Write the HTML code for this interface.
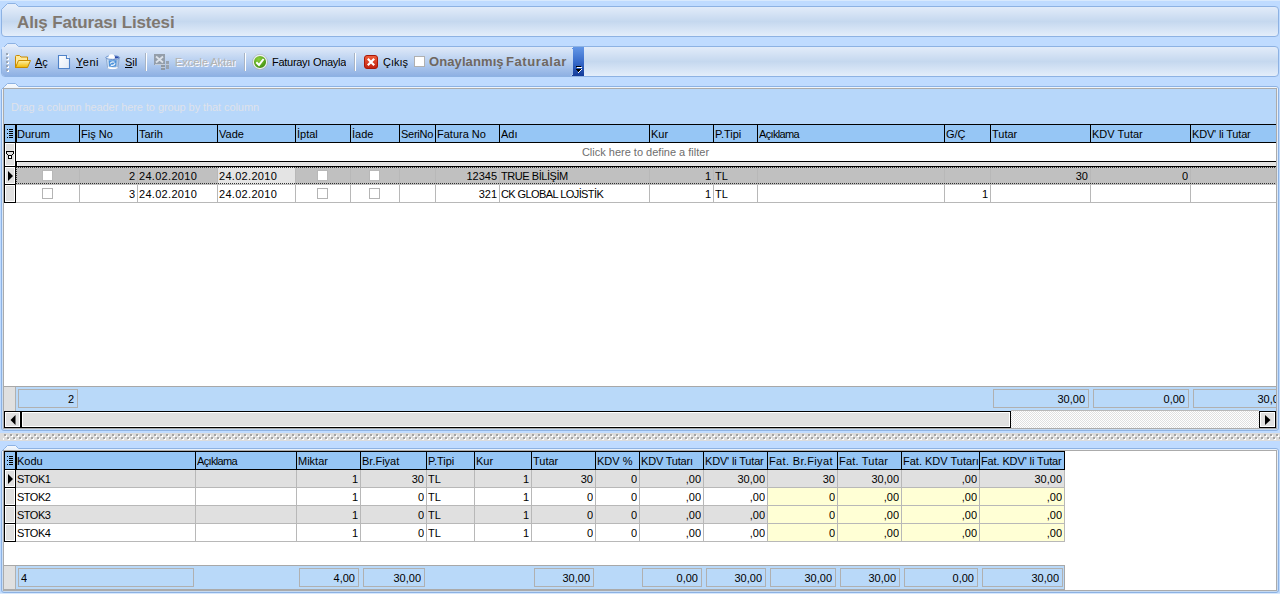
<!DOCTYPE html>
<html><head><meta charset="utf-8">
<style>
*{margin:0;padding:0;box-sizing:border-box}
html,body{width:1280px;height:594px;overflow:hidden}
body{background:#bfdbff;font-family:"Liberation Sans",sans-serif;font-size:11px;color:#000;position:relative}
.a{position:absolute}
.t{position:absolute;white-space:nowrap;line-height:17px;height:17px;overflow:hidden}
svg{position:absolute;overflow:visible}
</style></head><body>
<div class="a" style="left:0px;top:0px;width:1280px;height:1px;background:#d8e9fd"></div>
<svg style="left:0;top:0" width="1280" height="80">
 <defs>
  <linearGradient id="g1" gradientUnits="userSpaceOnUse" x1="0" y1="6" x2="0" y2="37">
   <stop offset="0" stop-color="#e4edfa"/>
   <stop offset="0.5" stop-color="#c5d8ef"/>
   <stop offset="1" stop-color="#e6effb"/>
  </linearGradient>
  <linearGradient id="g1b" gradientUnits="userSpaceOnUse" x1="0" y1="46" x2="0" y2="77">
   <stop offset="0" stop-color="#e4edfa"/>
   <stop offset="0.5" stop-color="#c5d8ef"/>
   <stop offset="1" stop-color="#e6effb"/>
  </linearGradient>
 </defs>
 <path d="M1.5,9.5 L1.5,33 Q1.5,36.5 5,36.5 L1275,36.5 Q1278.5,36.5 1278.5,33 L1278.5,10 Q1278.5,6.5 1275,6.5 L18.5,6.5 L15.5,3.5 L7.5,3.5 Z" fill="url(#g1)" stroke="#8db2e3"/>
 <path d="M1.5,49.5 L1.5,73 Q1.5,76.5 5,76.5 L1275,76.5 Q1278.5,76.5 1278.5,73 L1278.5,50 Q1278.5,46.5 1275,46.5 L18.5,46.5 L15.5,43.5 L7.5,43.5 Z" fill="url(#g1b)" stroke="#8db2e3"/>
</svg>
<div class="t" style="left:17px;top:13px;font-size:17px;line-height:20px;height:21px;font-weight:bold;color:#7f7870;letter-spacing:-0.15px">Alış Faturası Listesi</div>
<div class="a" style="left:2px;top:47px;width:571px;height:29px;background:linear-gradient(#dfe9f8,#b7cff0 50%,#8eb0e3);border-radius:0 3px 3px 3px"></div>
<svg style="left:566px;top:47px" width="20" height="30" shape-rendering="crispEdges">
 <defs><linearGradient id="cb" x1="0" y1="0" x2="0" y2="1"><stop offset="0" stop-color="#6497e6"/><stop offset="0.55" stop-color="#3568c8"/><stop offset="1" stop-color="#143a98"/></linearGradient></defs>
 <path d="M5,1 L7,1 L7,0 L18,0 L18,29 L5,29 L7,27 L7,2 Z" fill="url(#cb)"/>
 <rect x="10" y="19" width="5" height="1" fill="#000"/>
 <rect x="11" y="20" width="5" height="1" fill="#fff"/>
 <rect x="10" y="22" width="5" height="1" fill="#000"/>
 <rect x="11" y="23" width="3" height="1" fill="#000"/>
 <rect x="12" y="24" width="1" height="1" fill="#000"/>
 <rect x="15" y="22" width="1" height="1" fill="#fff"/>
 <rect x="14" y="23" width="1" height="1" fill="#fff"/>
 <rect x="13" y="24" width="1" height="1" fill="#fff"/>
 <rect x="12" y="25" width="1" height="1" fill="#fff"/>
</svg>
<div class="a" style="left:6px;top:53px;width:2px;height:2px;background:#9aa6b6"></div>
<div class="a" style="left:7px;top:54px;width:2px;height:2px;background:#fff;z-index:0"></div>
<div class="a" style="left:6px;top:53px;width:2px;height:2px;background:#9aa6b6"></div>
<div class="a" style="left:6px;top:57px;width:2px;height:2px;background:#9aa6b6"></div>
<div class="a" style="left:7px;top:58px;width:2px;height:2px;background:#fff;z-index:0"></div>
<div class="a" style="left:6px;top:57px;width:2px;height:2px;background:#9aa6b6"></div>
<div class="a" style="left:6px;top:61px;width:2px;height:2px;background:#9aa6b6"></div>
<div class="a" style="left:7px;top:62px;width:2px;height:2px;background:#fff;z-index:0"></div>
<div class="a" style="left:6px;top:61px;width:2px;height:2px;background:#9aa6b6"></div>
<div class="a" style="left:6px;top:65px;width:2px;height:2px;background:#9aa6b6"></div>
<div class="a" style="left:7px;top:66px;width:2px;height:2px;background:#fff;z-index:0"></div>
<div class="a" style="left:6px;top:65px;width:2px;height:2px;background:#9aa6b6"></div>
<div class="a" style="left:6px;top:69px;width:2px;height:2px;background:#9aa6b6"></div>
<div class="a" style="left:7px;top:70px;width:2px;height:2px;background:#fff;z-index:0"></div>
<div class="a" style="left:6px;top:69px;width:2px;height:2px;background:#9aa6b6"></div>
<div class="t" style="left:35px;top:54px;"><u>A</u>ç</div>
<div class="t" style="left:76px;top:54px;letter-spacing:0.5px"><u>Y</u>eni</div>
<div class="t" style="left:125px;top:54px;"><u>S</u>il</div>
<div class="t" style="left:175px;top:54px;color:#b4b2b0;text-shadow:1px 1px 0 #fff">Excele Aktar</div>
<div class="t" style="left:272px;top:54px;letter-spacing:-0.28px">Faturayı Onayla</div>
<div class="t" style="left:383px;top:54px;">Çıkış</div>
<div class="a" style="left:145px;top:53px;width:1px;height:18px;background:#a8b4c4"></div>
<div class="a" style="left:146px;top:53px;width:1px;height:18px;background:#fff"></div>
<div class="a" style="left:244px;top:53px;width:1px;height:18px;background:#a8b4c4"></div>
<div class="a" style="left:245px;top:53px;width:1px;height:18px;background:#fff"></div>
<div class="a" style="left:354px;top:53px;width:1px;height:18px;background:#a8b4c4"></div>
<div class="a" style="left:355px;top:53px;width:1px;height:18px;background:#fff"></div>
<div class="a" style="left:414px;top:56px;width:11px;height:11px;background:#fff;border:1px solid #b0b0b0"></div>
<div class="t" style="left:429px;top:54px;font-size:13px;line-height:16px;height:16px;font-weight:bold;color:#6f675f;letter-spacing:0.1px">Onaylanmış</div>
<div class="t" style="left:506px;top:54px;font-size:13px;line-height:16px;height:16px;font-weight:bold;color:#6f675f;letter-spacing:0.6px">Faturalar</div>
<svg style="left:15px;top:55px" width="17" height="14">
 <defs><linearGradient id="fo" x1="0" y1="0" x2="0" y2="1"><stop offset="0" stop-color="#fff2a8"/><stop offset="1" stop-color="#f0b800"/></linearGradient></defs>
 <path d="M0.5,1.5 Q0.5,0.5 1.5,0.5 L4.5,0.5 L6,2 L12.5,2 L12.5,5 L0.5,12.5 Z" fill="#ffe89a" stroke="#c88a00"/>
 <path d="M0.5,12.5 L3.5,5.5 L15.5,5.5 L12.5,12.5 Z" fill="url(#fo)" stroke="#c88a00"/>
</svg>
<svg style="left:58px;top:55px" width="13" height="15">
 <defs><linearGradient id="dc" x1="0" y1="0" x2="1" y2="1"><stop offset="0" stop-color="#ffffff"/><stop offset="1" stop-color="#dfe9f6"/></linearGradient></defs>
 <path d="M0.5,0.5 L8.5,0.5 L8.5,3.5 L11.5,3.5 L11.5,13.5 L0.5,13.5 Z" fill="url(#dc)" stroke="#4f82c8" stroke-width="1.1"/>
 <path d="M9.2,0.6 L11.4,2.8 L9.2,2.8 Z" fill="#ffffff"/>
</svg>
<svg style="left:105px;top:54px" width="16" height="16">
 <defs><linearGradient id="rb" x1="0" y1="0" x2="1" y2="0"><stop offset="0" stop-color="#bcd4ee"/><stop offset="0.35" stop-color="#f2f6fc"/><stop offset="1" stop-color="#9cb8dc"/></linearGradient></defs>
 <path d="M1.2,4.5 L14.3,4.5 L12.8,14.2 Q7.7,15.8 2.7,14.2 Z" fill="url(#rb)" stroke="#7f9cc4" stroke-width="0.7"/>
 <ellipse cx="7.7" cy="3.6" rx="6.9" ry="1.9" fill="#dce8f6" stroke="#5d88c8" stroke-width="0.9"/>
 <path d="M9.5,2.3 Q12.5,2 14.2,3.4 Q12,4.6 9.5,4.4 Z" fill="#2a48a8"/>
 <path d="M3.4,4.2 Q3.2,0.2 6.6,0.2 Q9.9,0.2 9.9,4.2 Z" fill="#ffffff"/>
 <path d="M3.6,6.2 L11.6,6.2 L11.2,12.6 Q7.6,13.4 4,12.6 Z" fill="#4c92da"/>
 <path d="M5.2,9.6 Q6.4,7.2 9.6,8.2 M5.8,11.2 Q8.8,12 10.2,9.4" stroke="#f0f6fd" stroke-width="1.2" fill="none"/>
 <path d="M2.8,13.7 Q7.7,15.6 12.6,13.7" stroke="#ffffff" stroke-width="1.3" fill="none"/>
</svg>
<svg style="left:154px;top:54px" width="17" height="17" shape-rendering="crispEdges">
 <rect x="0" y="0" width="11" height="11" fill="#949eaa"/>
 <rect x="1" y="10" width="10" height="1" fill="#c6ced8"/>
 <path d="M2,2.5 L9,8.5 M9,2.5 L2,8.5" stroke="#dce2ea" stroke-width="1.8" shape-rendering="auto"/>
 <rect x="7" y="11" width="4" height="5" fill="#8e98a4"/><rect x="7" y="13" width="4" height="1" fill="#c0c8d2"/>
 <rect x="12" y="7" width="3" height="8" fill="#98a2ae"/><rect x="12" y="10" width="3" height="1" fill="#c0c8d2"/>
</svg>
<svg style="left:252px;top:54px" width="16" height="16">
 <defs><radialGradient id="gc" cx="0.4" cy="0.3" r="0.75"><stop offset="0" stop-color="#8cd03c"/><stop offset="1" stop-color="#3a8a0e"/></radialGradient></defs>
 <circle cx="8" cy="8" r="7.6" fill="none" stroke="#a8aca8" stroke-width="0.6"/>
 <circle cx="8" cy="8" r="6.6" fill="url(#gc)" stroke="#eef0ee" stroke-width="1.1"/>
 <path d="M4.3,8.2 L7,10.9 L11.6,5" stroke="#fff" stroke-width="2" fill="none"/>
</svg>
<svg style="left:364px;top:55px" width="14" height="14">
 <defs><linearGradient id="gx" x1="0" y1="0" x2="0" y2="1"><stop offset="0" stop-color="#f0603c"/><stop offset="1" stop-color="#c02010"/></linearGradient></defs>
 <rect x="0.5" y="0.5" width="13" height="13" rx="2.5" fill="url(#gx)" stroke="#a81808"/>
 <path d="M3.8,3.8 L10.2,10.2 M10.2,3.8 L3.8,10.2" stroke="#fff" stroke-width="2.2"/>
</svg>
<svg style="left:0;top:0" width="1280" height="594">
 <defs><linearGradient id="pg86" x1="0" y1="0" x2="0" y2="1"><stop offset="0" stop-color="#f6f9fd"/><stop offset="0.03" stop-color="#e6eff9"/><stop offset="1" stop-color="#c6daf1"/></linearGradient></defs>
 <path d="M1.5,89.5 L1.5,428 Q1.5,430.5 4,430.5 L1276,430.5 Q1278.5,430.5 1278.5,428 L1278.5,89 Q1278.5,86.5 1276,86.5 L18.5,86.5 L15.5,83.5 L7.5,83.5 L4.5,86.5 Z" fill="url(#pg86)" stroke="#8db2e3"/>
</svg>
<div class="a" style="left:3px;top:88px;width:1274px;height:341px;border:1px solid #ababab;background:#fff"></div>
<svg style="left:0;top:0" width="1280" height="594">
 <defs><linearGradient id="pg448" x1="0" y1="0" x2="0" y2="1"><stop offset="0" stop-color="#f6f9fd"/><stop offset="0.03" stop-color="#e6eff9"/><stop offset="1" stop-color="#c6daf1"/></linearGradient></defs>
 <path d="M1.5,451.5 L1.5,590 Q1.5,592.5 4,592.5 L1276,592.5 Q1278.5,592.5 1278.5,590 L1278.5,451 Q1278.5,448.5 1276,448.5 L18.5,448.5 L15.5,445.5 L7.5,445.5 L4.5,448.5 Z" fill="url(#pg448)" stroke="#8db2e3"/>
</svg>
<div class="a" style="left:3px;top:450px;width:1274px;height:141px;border:1px solid #ababab;background:#fff"></div>
<div class="a" style="left:4px;top:89px;width:1272px;height:35px;background:#b7d7fa"></div>
<div class="t" style="left:11px;top:99px;color:#dfe2ea;letter-spacing:-0.08px">Drag a column header here to group by that column</div>
<div class="a" style="left:4px;top:124px;width:1272px;height:19px;background:#96c6f5;border-top:1px solid #000;border-bottom:1px solid #000;border-left:1px solid #000"></div>
<div class="a" style="left:15px;top:124px;width:1px;height:19px;background:#000"></div>
<div class="a" style="left:79px;top:124px;width:1px;height:19px;background:#000"></div>
<div class="a" style="left:137px;top:124px;width:1px;height:19px;background:#000"></div>
<div class="a" style="left:217px;top:124px;width:1px;height:19px;background:#000"></div>
<div class="a" style="left:295px;top:124px;width:1px;height:19px;background:#000"></div>
<div class="a" style="left:350px;top:124px;width:1px;height:19px;background:#000"></div>
<div class="a" style="left:399px;top:124px;width:1px;height:19px;background:#000"></div>
<div class="a" style="left:435px;top:124px;width:1px;height:19px;background:#000"></div>
<div class="a" style="left:499px;top:124px;width:1px;height:19px;background:#000"></div>
<div class="a" style="left:649px;top:124px;width:1px;height:19px;background:#000"></div>
<div class="a" style="left:713px;top:124px;width:1px;height:19px;background:#000"></div>
<div class="a" style="left:757px;top:124px;width:1px;height:19px;background:#000"></div>
<div class="a" style="left:944px;top:124px;width:1px;height:19px;background:#000"></div>
<div class="a" style="left:990px;top:124px;width:1px;height:19px;background:#000"></div>
<div class="a" style="left:1090px;top:124px;width:1px;height:19px;background:#000"></div>
<div class="a" style="left:1190px;top:124px;width:1px;height:19px;background:#000"></div>
<div class="a" style="left:16px;top:124px;width:1px;height:19px;background:#000"></div>
<svg style="left:7px;top:129px" width="7" height="9"><rect x="0" y="0" width="1" height="1" fill="#000"/><rect x="0" y="4" width="1" height="1" fill="#000"/><rect x="0" y="8" width="1" height="1" fill="#000"/><rect x="2" y="0" width="4" height="1" fill="#000"/><rect x="2" y="2" width="4" height="1" fill="#000"/><rect x="2" y="4" width="4" height="1" fill="#000"/><rect x="2" y="6" width="4" height="1" fill="#000"/><rect x="2" y="8" width="4" height="1" fill="#000"/></svg>
<div class="t" style="left:17px;top:126px;width:62px">Durum</div>
<div class="t" style="left:81px;top:126px;width:56px">Fiş No</div>
<div class="t" style="left:139px;top:126px;width:78px">Tarih</div>
<div class="t" style="left:219px;top:126px;width:76px">Vade</div>
<div class="t" style="left:297px;top:126px;width:53px">İptal</div>
<div class="t" style="left:352px;top:126px;width:47px">İade</div>
<div class="t" style="left:401px;top:126px;width:34px;letter-spacing:-0.25px">SeriNo</div>
<div class="t" style="left:437px;top:126px;width:62px">Fatura No</div>
<div class="t" style="left:501px;top:126px;width:148px">Adı</div>
<div class="t" style="left:651px;top:126px;width:62px">Kur</div>
<div class="t" style="left:715px;top:126px;width:42px">P.Tipi</div>
<div class="t" style="left:759px;top:126px;width:185px;letter-spacing:-0.65px">Açıklama</div>
<div class="t" style="left:946px;top:126px;width:44px">G/Ç</div>
<div class="t" style="left:992px;top:126px;width:98px">Tutar</div>
<div class="t" style="left:1092px;top:126px;width:98px">KDV Tutar</div>
<div class="t" style="left:1192px;top:126px;width:84px;letter-spacing:-0.17px">KDV' li Tutar</div>
<div class="a" style="left:4px;top:143px;width:12px;height:24px;background:#e0e0e0;border-left:1px solid #000;border-right:1px solid #000;border-bottom:1px solid #000;box-shadow:inset 1px 1px 0 #fff, inset -1px -1px 0 #fff"></div>
<svg style="left:6px;top:151px" width="8" height="8" shape-rendering="crispEdges"><rect x="0" y="0" width="8" height="1"/><rect x="0" y="0" width="1" height="3"/><rect x="7" y="0" width="1" height="3"/><rect x="1" y="3" width="1" height="1"/><rect x="6" y="3" width="1" height="1"/><rect x="2" y="4" width="4" height="4"/><rect x="3" y="5" width="2" height="2" fill="#fff"/></svg>
<div class="t" style="left:16px;top:144px;width:1259px;text-align:center;color:#6e6e6e">Click here to define a filter</div>
<div class="a" style="left:15px;top:161px;width:1261px;height:1px;background:#000"></div>
<div class="a" style="left:16px;top:162px;width:1260px;height:4px;background:#e4e4e4;border-left:1px solid #000;box-shadow:inset 1px 0 0 #fff"></div>
<div class="a" style="left:4px;top:166px;width:1272px;height:1px;background:#000"></div>
<div class="a" style="left:4px;top:167px;width:12px;height:18px;background:#e0e0e0;border-left:1px solid #000;border-right:1px solid #000;border-bottom:1px solid #000;box-shadow:inset 1px 1px 0 #fff, inset -1px -1px 0 #fff"></div>
<div class="a" style="left:4px;top:185px;width:12px;height:18px;background:#e0e0e0;border-left:1px solid #000;border-right:1px solid #000;border-bottom:1px solid #000;box-shadow:inset 1px 1px 0 #fff, inset -1px -1px 0 #fff"></div>
<svg style="left:8px;top:171px" width="6" height="10"><path d="M0,0 L5,5 L0,10 Z" fill="#000"/></svg>
<div class="a" style="left:16px;top:167px;width:1260px;height:17px;background:#c0c0c0"></div>
<div class="a" style="left:217px;top:167px;width:78px;height:17px;background:#e4e4e4"></div>
<div class="a" style="left:79px;top:167px;width:1px;height:35px;background:#b8b8b8"></div>
<div class="a" style="left:137px;top:167px;width:1px;height:35px;background:#b8b8b8"></div>
<div class="a" style="left:217px;top:167px;width:1px;height:35px;background:#b8b8b8"></div>
<div class="a" style="left:295px;top:167px;width:1px;height:35px;background:#b8b8b8"></div>
<div class="a" style="left:350px;top:167px;width:1px;height:35px;background:#b8b8b8"></div>
<div class="a" style="left:399px;top:167px;width:1px;height:35px;background:#b8b8b8"></div>
<div class="a" style="left:435px;top:167px;width:1px;height:35px;background:#b8b8b8"></div>
<div class="a" style="left:499px;top:167px;width:1px;height:35px;background:#b8b8b8"></div>
<div class="a" style="left:649px;top:167px;width:1px;height:35px;background:#b8b8b8"></div>
<div class="a" style="left:713px;top:167px;width:1px;height:35px;background:#b8b8b8"></div>
<div class="a" style="left:757px;top:167px;width:1px;height:35px;background:#b8b8b8"></div>
<div class="a" style="left:944px;top:167px;width:1px;height:35px;background:#b8b8b8"></div>
<div class="a" style="left:990px;top:167px;width:1px;height:35px;background:#b8b8b8"></div>
<div class="a" style="left:1090px;top:167px;width:1px;height:35px;background:#b8b8b8"></div>
<div class="a" style="left:1190px;top:167px;width:1px;height:35px;background:#b8b8b8"></div>
<div class="a" style="left:16px;top:184px;width:1260px;height:1px;background:#c0c0c0"></div>
<div class="a" style="left:16px;top:202px;width:1260px;height:1px;background:#b8b8b8"></div>
<div class="a" style="left:16px;top:167px;width:1260px;height:1px;background:repeating-linear-gradient(90deg,#303030 0 1px,transparent 1px 2px)"></div>
<div class="a" style="left:16px;top:183px;width:1260px;height:1px;background:repeating-linear-gradient(90deg,#303030 0 1px,transparent 1px 2px)"></div>
<div class="a" style="left:16px;top:167px;width:1px;height:17px;background:repeating-linear-gradient(180deg,#303030 0 1px,transparent 1px 2px)"></div>
<div class="t" style="left:80px;top:168px;width:55px;text-align:right">2</div>
<div class="t" style="left:139px;top:168px;width:78px;letter-spacing:0.3px">24.02.2010</div>
<div class="t" style="left:219px;top:168px;width:76px;letter-spacing:0.3px">24.02.2010</div>
<div class="t" style="left:436px;top:168px;width:61px;text-align:right">12345</div>
<div class="t" style="left:501px;top:168px;width:148px;letter-spacing:-0.45px">TRUE BİLİŞİM</div>
<div class="t" style="left:650px;top:168px;width:61px;text-align:right">1</div>
<div class="t" style="left:715px;top:168px;width:42px">TL</div>
<div class="t" style="left:991px;top:168px;width:97px;text-align:right">30</div>
<div class="t" style="left:1091px;top:168px;width:97px;text-align:right">0</div>
<div class="t" style="left:80px;top:186px;width:55px;text-align:right">3</div>
<div class="t" style="left:139px;top:186px;width:78px;letter-spacing:0.3px">24.02.2010</div>
<div class="t" style="left:219px;top:186px;width:76px;letter-spacing:0.3px">24.02.2010</div>
<div class="t" style="left:436px;top:186px;width:61px;text-align:right">321</div>
<div class="t" style="left:501px;top:186px;width:148px;letter-spacing:-0.58px">CK GLOBAL LOJİSTİK</div>
<div class="t" style="left:650px;top:186px;width:61px;text-align:right">1</div>
<div class="t" style="left:715px;top:186px;width:42px">TL</div>
<div class="t" style="left:945px;top:186px;width:43px;text-align:right">1</div>
<div class="a" style="left:42px;top:170px;width:11px;height:11px;background:#fff;border:1px solid #b8b8b8"></div>
<div class="a" style="left:42px;top:188px;width:11px;height:11px;background:#fff;border:1px solid #b4b4b4"></div>
<div class="a" style="left:317px;top:170px;width:11px;height:11px;background:#fff;border:1px solid #b8b8b8"></div>
<div class="a" style="left:317px;top:188px;width:11px;height:11px;background:#fff;border:1px solid #b4b4b4"></div>
<div class="a" style="left:369px;top:170px;width:11px;height:11px;background:#fff;border:1px solid #b8b8b8"></div>
<div class="a" style="left:369px;top:188px;width:11px;height:11px;background:#fff;border:1px solid #b4b4b4"></div>
<div class="a" style="left:4px;top:386px;width:1272px;height:25px;background:#b9d9f9;border-top:1px solid #a8a8a8"></div>
<div class="a" style="left:4px;top:387px;width:11px;height:24px;background:#e0e0e0"></div>
<div class="a" style="left:15px;top:387px;width:1px;height:24px;background:#b0b0b0"></div>
<div class="a" style="left:18px;top:389px;width:60px;height:19px;border:1px solid #b0b0b0;overflow:hidden"></div>
<div class="t" style="left:19px;top:391px;width:55px;text-align:right">2</div>
<div class="a" style="left:993px;top:389px;width:96px;height:19px;border:1px solid #b0b0b0;overflow:hidden"></div>
<div class="t" style="left:994px;top:391px;width:91px;text-align:right">30,00</div>
<div class="a" style="left:1093px;top:389px;width:96px;height:19px;border:1px solid #b0b0b0;overflow:hidden"></div>
<div class="t" style="left:1094px;top:391px;width:91px;text-align:right">0,00</div>
<div class="a" style="left:1193px;top:389px;width:83px;height:19px;overflow:hidden"><div class="a" style="left:0;top:0;width:96px;height:19px;border:1px solid #b0b0b0"></div><div class="t" style="left:1px;top:2px;width:91px;text-align:right">30,00</div></div>
<div class="a" style="left:4px;top:411px;width:1272px;height:17px;background:repeating-conic-gradient(#e0e0e0 0 25%, #fff 0 50%) 0 0/2px 2px"></div>
<div class="a" style="left:1011px;top:410px;width:248px;height:1px;background:#b8b8b8"></div>
<div class="a" style="left:4px;top:411px;width:17px;height:17px;background:#e0e0e0;border:1px solid #000;box-shadow:inset 0 0 0 1px #fff"></div>
<div class="a" style="left:20px;top:411px;width:991px;height:17px;background:#e0e0e0;border:1px solid #000;border-left-width:2px;box-shadow:inset 0 0 0 1px #fff"></div>
<div class="a" style="left:1259px;top:411px;width:17px;height:17px;background:#e0e0e0;border:1px solid #000;box-shadow:inset 0 0 0 1px #fff"></div>
<svg style="left:10px;top:415px" width="6" height="10"><path d="M5.5,0 L0.5,5 L5.5,10 Z" fill="#000"/></svg>
<svg style="left:1265px;top:415px" width="6" height="10"><path d="M0,0 L5.5,5 L0,10 Z" fill="#000"/></svg>
<div class="a" style="left:0px;top:433px;width:1280px;height:8px;background:#dcdcdc"></div>
<svg style="left:0;top:433px" width="1280" height="8"><defs><pattern id="sp" x="0" y="0" width="6" height="8" patternUnits="userSpaceOnUse"><rect x="4" y="1" width="2" height="2" fill="#a4a4a4"/><rect x="0" y="2" width="1" height="2" fill="#fff"/><rect x="5" y="3" width="1" height="1" fill="#fff"/><rect x="1" y="4" width="2" height="2" fill="#a4a4a4"/><rect x="3" y="5" width="1" height="2" fill="#fff"/><rect x="2" y="6" width="1" height="1" fill="#fff"/></pattern></defs><rect x="3" y="0" width="1277" height="8" fill="url(#sp)"/></svg>
<div class="a" style="left:4px;top:451px;width:1061px;height:19px;background:#96c6f5;border-top:1px solid #000;border-bottom:1px solid #000;border-left:1px solid #000"></div>
<div class="a" style="left:15px;top:451px;width:1px;height:19px;background:#000"></div>
<div class="a" style="left:195px;top:451px;width:1px;height:19px;background:#000"></div>
<div class="a" style="left:296px;top:451px;width:1px;height:19px;background:#000"></div>
<div class="a" style="left:360px;top:451px;width:1px;height:19px;background:#000"></div>
<div class="a" style="left:426px;top:451px;width:1px;height:19px;background:#000"></div>
<div class="a" style="left:474px;top:451px;width:1px;height:19px;background:#000"></div>
<div class="a" style="left:531px;top:451px;width:1px;height:19px;background:#000"></div>
<div class="a" style="left:595px;top:451px;width:1px;height:19px;background:#000"></div>
<div class="a" style="left:639px;top:451px;width:1px;height:19px;background:#000"></div>
<div class="a" style="left:703px;top:451px;width:1px;height:19px;background:#000"></div>
<div class="a" style="left:767px;top:451px;width:1px;height:19px;background:#000"></div>
<div class="a" style="left:837px;top:451px;width:1px;height:19px;background:#000"></div>
<div class="a" style="left:901px;top:451px;width:1px;height:19px;background:#000"></div>
<div class="a" style="left:979px;top:451px;width:1px;height:19px;background:#000"></div>
<div class="a" style="left:16px;top:451px;width:1px;height:19px;background:#000"></div>
<div class="a" style="left:1064px;top:451px;width:1px;height:19px;background:#000"></div>
<svg style="left:7px;top:456px" width="7" height="9"><rect x="0" y="0" width="1" height="1" fill="#000"/><rect x="0" y="4" width="1" height="1" fill="#000"/><rect x="0" y="8" width="1" height="1" fill="#000"/><rect x="2" y="0" width="4" height="1" fill="#000"/><rect x="2" y="2" width="4" height="1" fill="#000"/><rect x="2" y="4" width="4" height="1" fill="#000"/><rect x="2" y="6" width="4" height="1" fill="#000"/><rect x="2" y="8" width="4" height="1" fill="#000"/></svg>
<div class="t" style="left:17px;top:453px;width:178px">Kodu</div>
<div class="t" style="left:197px;top:453px;width:99px;letter-spacing:-0.65px">Açıklama</div>
<div class="t" style="left:298px;top:453px;width:62px">Miktar</div>
<div class="t" style="left:362px;top:453px;width:64px">Br.Fiyat</div>
<div class="t" style="left:428px;top:453px;width:46px">P.Tipi</div>
<div class="t" style="left:476px;top:453px;width:55px">Kur</div>
<div class="t" style="left:533px;top:453px;width:62px">Tutar</div>
<div class="t" style="left:597px;top:453px;width:42px">KDV %</div>
<div class="t" style="left:641px;top:453px;width:62px;letter-spacing:-0.2px">KDV Tutarı</div>
<div class="t" style="left:705px;top:453px;width:62px;letter-spacing:-0.17px">KDV' li Tutar</div>
<div class="t" style="left:769px;top:453px;width:68px;letter-spacing:0.35px">Fat. Br.Fiyat</div>
<div class="t" style="left:839px;top:453px;width:62px;letter-spacing:0.2px">Fat. Tutar</div>
<div class="t" style="left:903px;top:453px;width:76px">Fat. KDV Tutarı</div>
<div class="t" style="left:981px;top:453px;width:83px;letter-spacing:-0.12px">Fat. KDV' li Tutar</div>
<div class="a" style="left:4px;top:470px;width:12px;height:18px;background:#e0e0e0;border-left:1px solid #000;border-right:1px solid #000;border-bottom:1px solid #000;box-shadow:inset 1px 1px 0 #fff, inset -1px -1px 0 #fff"></div>
<div class="a" style="left:16px;top:470px;width:1048px;height:17px;background:#e0e0e0"></div>
<div class="a" style="left:16px;top:487px;width:1048px;height:1px;background:#b8b8b8"></div>
<div class="t" style="left:17px;top:471px;width:178px;letter-spacing:-0.5px">STOK1</div>
<div class="t" style="left:297px;top:471px;width:61px;text-align:right">1</div>
<div class="t" style="left:361px;top:471px;width:63px;text-align:right">30</div>
<div class="t" style="left:428px;top:471px;width:46px">TL</div>
<div class="t" style="left:475px;top:471px;width:54px;text-align:right">1</div>
<div class="t" style="left:532px;top:471px;width:61px;text-align:right">30</div>
<div class="t" style="left:596px;top:471px;width:41px;text-align:right">0</div>
<div class="t" style="left:640px;top:471px;width:61px;text-align:right">,00</div>
<div class="t" style="left:704px;top:471px;width:61px;text-align:right">30,00</div>
<div class="t" style="left:768px;top:471px;width:67px;text-align:right">30</div>
<div class="t" style="left:838px;top:471px;width:61px;text-align:right">30,00</div>
<div class="t" style="left:902px;top:471px;width:75px;text-align:right">,00</div>
<div class="t" style="left:980px;top:471px;width:82px;text-align:right">30,00</div>
<div class="a" style="left:4px;top:488px;width:12px;height:18px;background:#e0e0e0;border-left:1px solid #000;border-right:1px solid #000;border-bottom:1px solid #000;box-shadow:inset 1px 1px 0 #fff, inset -1px -1px 0 #fff"></div>
<div class="a" style="left:16px;top:488px;width:1048px;height:17px;background:#fff"></div>
<div class="a" style="left:767px;top:488px;width:297px;height:17px;background:#ffffd5"></div>
<div class="a" style="left:16px;top:505px;width:1048px;height:1px;background:#b8b8b8"></div>
<div class="t" style="left:17px;top:489px;width:178px;letter-spacing:-0.5px">STOK2</div>
<div class="t" style="left:297px;top:489px;width:61px;text-align:right">1</div>
<div class="t" style="left:361px;top:489px;width:63px;text-align:right">0</div>
<div class="t" style="left:428px;top:489px;width:46px">TL</div>
<div class="t" style="left:475px;top:489px;width:54px;text-align:right">1</div>
<div class="t" style="left:532px;top:489px;width:61px;text-align:right">0</div>
<div class="t" style="left:596px;top:489px;width:41px;text-align:right">0</div>
<div class="t" style="left:640px;top:489px;width:61px;text-align:right">,00</div>
<div class="t" style="left:704px;top:489px;width:61px;text-align:right">,00</div>
<div class="t" style="left:768px;top:489px;width:67px;text-align:right">0</div>
<div class="t" style="left:838px;top:489px;width:61px;text-align:right">,00</div>
<div class="t" style="left:902px;top:489px;width:75px;text-align:right">,00</div>
<div class="t" style="left:980px;top:489px;width:82px;text-align:right">,00</div>
<div class="a" style="left:4px;top:506px;width:12px;height:18px;background:#e0e0e0;border-left:1px solid #000;border-right:1px solid #000;border-bottom:1px solid #000;box-shadow:inset 1px 1px 0 #fff, inset -1px -1px 0 #fff"></div>
<div class="a" style="left:16px;top:506px;width:1048px;height:17px;background:#e0e0e0"></div>
<div class="a" style="left:767px;top:506px;width:297px;height:17px;background:#ffffd5"></div>
<div class="a" style="left:16px;top:523px;width:1048px;height:1px;background:#b8b8b8"></div>
<div class="t" style="left:17px;top:507px;width:178px;letter-spacing:-0.5px">STOK3</div>
<div class="t" style="left:297px;top:507px;width:61px;text-align:right">1</div>
<div class="t" style="left:361px;top:507px;width:63px;text-align:right">0</div>
<div class="t" style="left:428px;top:507px;width:46px">TL</div>
<div class="t" style="left:475px;top:507px;width:54px;text-align:right">1</div>
<div class="t" style="left:532px;top:507px;width:61px;text-align:right">0</div>
<div class="t" style="left:596px;top:507px;width:41px;text-align:right">0</div>
<div class="t" style="left:640px;top:507px;width:61px;text-align:right">,00</div>
<div class="t" style="left:704px;top:507px;width:61px;text-align:right">,00</div>
<div class="t" style="left:768px;top:507px;width:67px;text-align:right">0</div>
<div class="t" style="left:838px;top:507px;width:61px;text-align:right">,00</div>
<div class="t" style="left:902px;top:507px;width:75px;text-align:right">,00</div>
<div class="t" style="left:980px;top:507px;width:82px;text-align:right">,00</div>
<div class="a" style="left:4px;top:524px;width:12px;height:18px;background:#e0e0e0;border-left:1px solid #000;border-right:1px solid #000;border-bottom:1px solid #000;box-shadow:inset 1px 1px 0 #fff, inset -1px -1px 0 #fff"></div>
<div class="a" style="left:16px;top:524px;width:1048px;height:17px;background:#fff"></div>
<div class="a" style="left:767px;top:524px;width:297px;height:17px;background:#ffffd5"></div>
<div class="a" style="left:16px;top:541px;width:1048px;height:1px;background:#b8b8b8"></div>
<div class="t" style="left:17px;top:525px;width:178px;letter-spacing:-0.5px">STOK4</div>
<div class="t" style="left:297px;top:525px;width:61px;text-align:right">1</div>
<div class="t" style="left:361px;top:525px;width:63px;text-align:right">0</div>
<div class="t" style="left:428px;top:525px;width:46px">TL</div>
<div class="t" style="left:475px;top:525px;width:54px;text-align:right">1</div>
<div class="t" style="left:532px;top:525px;width:61px;text-align:right">0</div>
<div class="t" style="left:596px;top:525px;width:41px;text-align:right">0</div>
<div class="t" style="left:640px;top:525px;width:61px;text-align:right">,00</div>
<div class="t" style="left:704px;top:525px;width:61px;text-align:right">,00</div>
<div class="t" style="left:768px;top:525px;width:67px;text-align:right">0</div>
<div class="t" style="left:838px;top:525px;width:61px;text-align:right">,00</div>
<div class="t" style="left:902px;top:525px;width:75px;text-align:right">,00</div>
<div class="t" style="left:980px;top:525px;width:82px;text-align:right">,00</div>
<div class="a" style="left:195px;top:470px;width:1px;height:72px;background:#b8b8b8"></div>
<div class="a" style="left:296px;top:470px;width:1px;height:72px;background:#b8b8b8"></div>
<div class="a" style="left:360px;top:470px;width:1px;height:72px;background:#b8b8b8"></div>
<div class="a" style="left:426px;top:470px;width:1px;height:72px;background:#b8b8b8"></div>
<div class="a" style="left:474px;top:470px;width:1px;height:72px;background:#b8b8b8"></div>
<div class="a" style="left:531px;top:470px;width:1px;height:72px;background:#b8b8b8"></div>
<div class="a" style="left:595px;top:470px;width:1px;height:72px;background:#b8b8b8"></div>
<div class="a" style="left:639px;top:470px;width:1px;height:72px;background:#b8b8b8"></div>
<div class="a" style="left:703px;top:470px;width:1px;height:72px;background:#b8b8b8"></div>
<div class="a" style="left:767px;top:470px;width:1px;height:72px;background:#b8b8b8"></div>
<div class="a" style="left:837px;top:470px;width:1px;height:72px;background:#b8b8b8"></div>
<div class="a" style="left:901px;top:470px;width:1px;height:72px;background:#b8b8b8"></div>
<div class="a" style="left:979px;top:470px;width:1px;height:72px;background:#b8b8b8"></div>
<div class="a" style="left:1064px;top:470px;width:1px;height:72px;background:#b8b8b8"></div>
<svg style="left:8px;top:474px" width="6" height="10"><path d="M0,0 L5,5 L0,10 Z" fill="#000"/></svg>
<div class="a" style="left:4px;top:565px;width:1061px;height:24px;background:#b9d9f9;border-top:1px solid #a8a8a8;border-right:1px solid #a8a8a8"></div>
<div class="a" style="left:4px;top:566px;width:11px;height:23px;background:#e0e0e0"></div>
<div class="a" style="left:15px;top:566px;width:1px;height:23px;background:#b0b0b0"></div>
<div class="a" style="left:4px;top:589px;width:1061px;height:1px;background:#aaaaaa"></div>
<div class="a" style="left:18px;top:568px;width:176px;height:19px;border:1px solid #b0b0b0;overflow:hidden"></div>
<div class="t" style="left:21px;top:570px;">4</div>
<div class="a" style="left:299px;top:568px;width:60px;height:19px;border:1px solid #b0b0b0;overflow:hidden"></div>
<div class="t" style="left:300px;top:570px;width:55px;text-align:right">4,00</div>
<div class="a" style="left:363px;top:568px;width:62px;height:19px;border:1px solid #b0b0b0;overflow:hidden"></div>
<div class="t" style="left:364px;top:570px;width:57px;text-align:right">30,00</div>
<div class="a" style="left:534px;top:568px;width:60px;height:19px;border:1px solid #b0b0b0;overflow:hidden"></div>
<div class="t" style="left:535px;top:570px;width:55px;text-align:right">30,00</div>
<div class="a" style="left:642px;top:568px;width:60px;height:19px;border:1px solid #b0b0b0;overflow:hidden"></div>
<div class="t" style="left:643px;top:570px;width:55px;text-align:right">0,00</div>
<div class="a" style="left:706px;top:568px;width:60px;height:19px;border:1px solid #b0b0b0;overflow:hidden"></div>
<div class="t" style="left:707px;top:570px;width:55px;text-align:right">30,00</div>
<div class="a" style="left:770px;top:568px;width:66px;height:19px;border:1px solid #b0b0b0;overflow:hidden"></div>
<div class="t" style="left:771px;top:570px;width:61px;text-align:right">30,00</div>
<div class="a" style="left:840px;top:568px;width:60px;height:19px;border:1px solid #b0b0b0;overflow:hidden"></div>
<div class="t" style="left:841px;top:570px;width:55px;text-align:right">30,00</div>
<div class="a" style="left:904px;top:568px;width:74px;height:19px;border:1px solid #b0b0b0;overflow:hidden"></div>
<div class="t" style="left:905px;top:570px;width:69px;text-align:right">0,00</div>
<div class="a" style="left:982px;top:568px;width:81px;height:19px;border:1px solid #b0b0b0;overflow:hidden"></div>
<div class="t" style="left:983px;top:570px;width:76px;text-align:right">30,00</div>
<div class="a" style="left:0px;top:593px;width:1280px;height:1px;background:#d6e7fc"></div>
</body></html>
